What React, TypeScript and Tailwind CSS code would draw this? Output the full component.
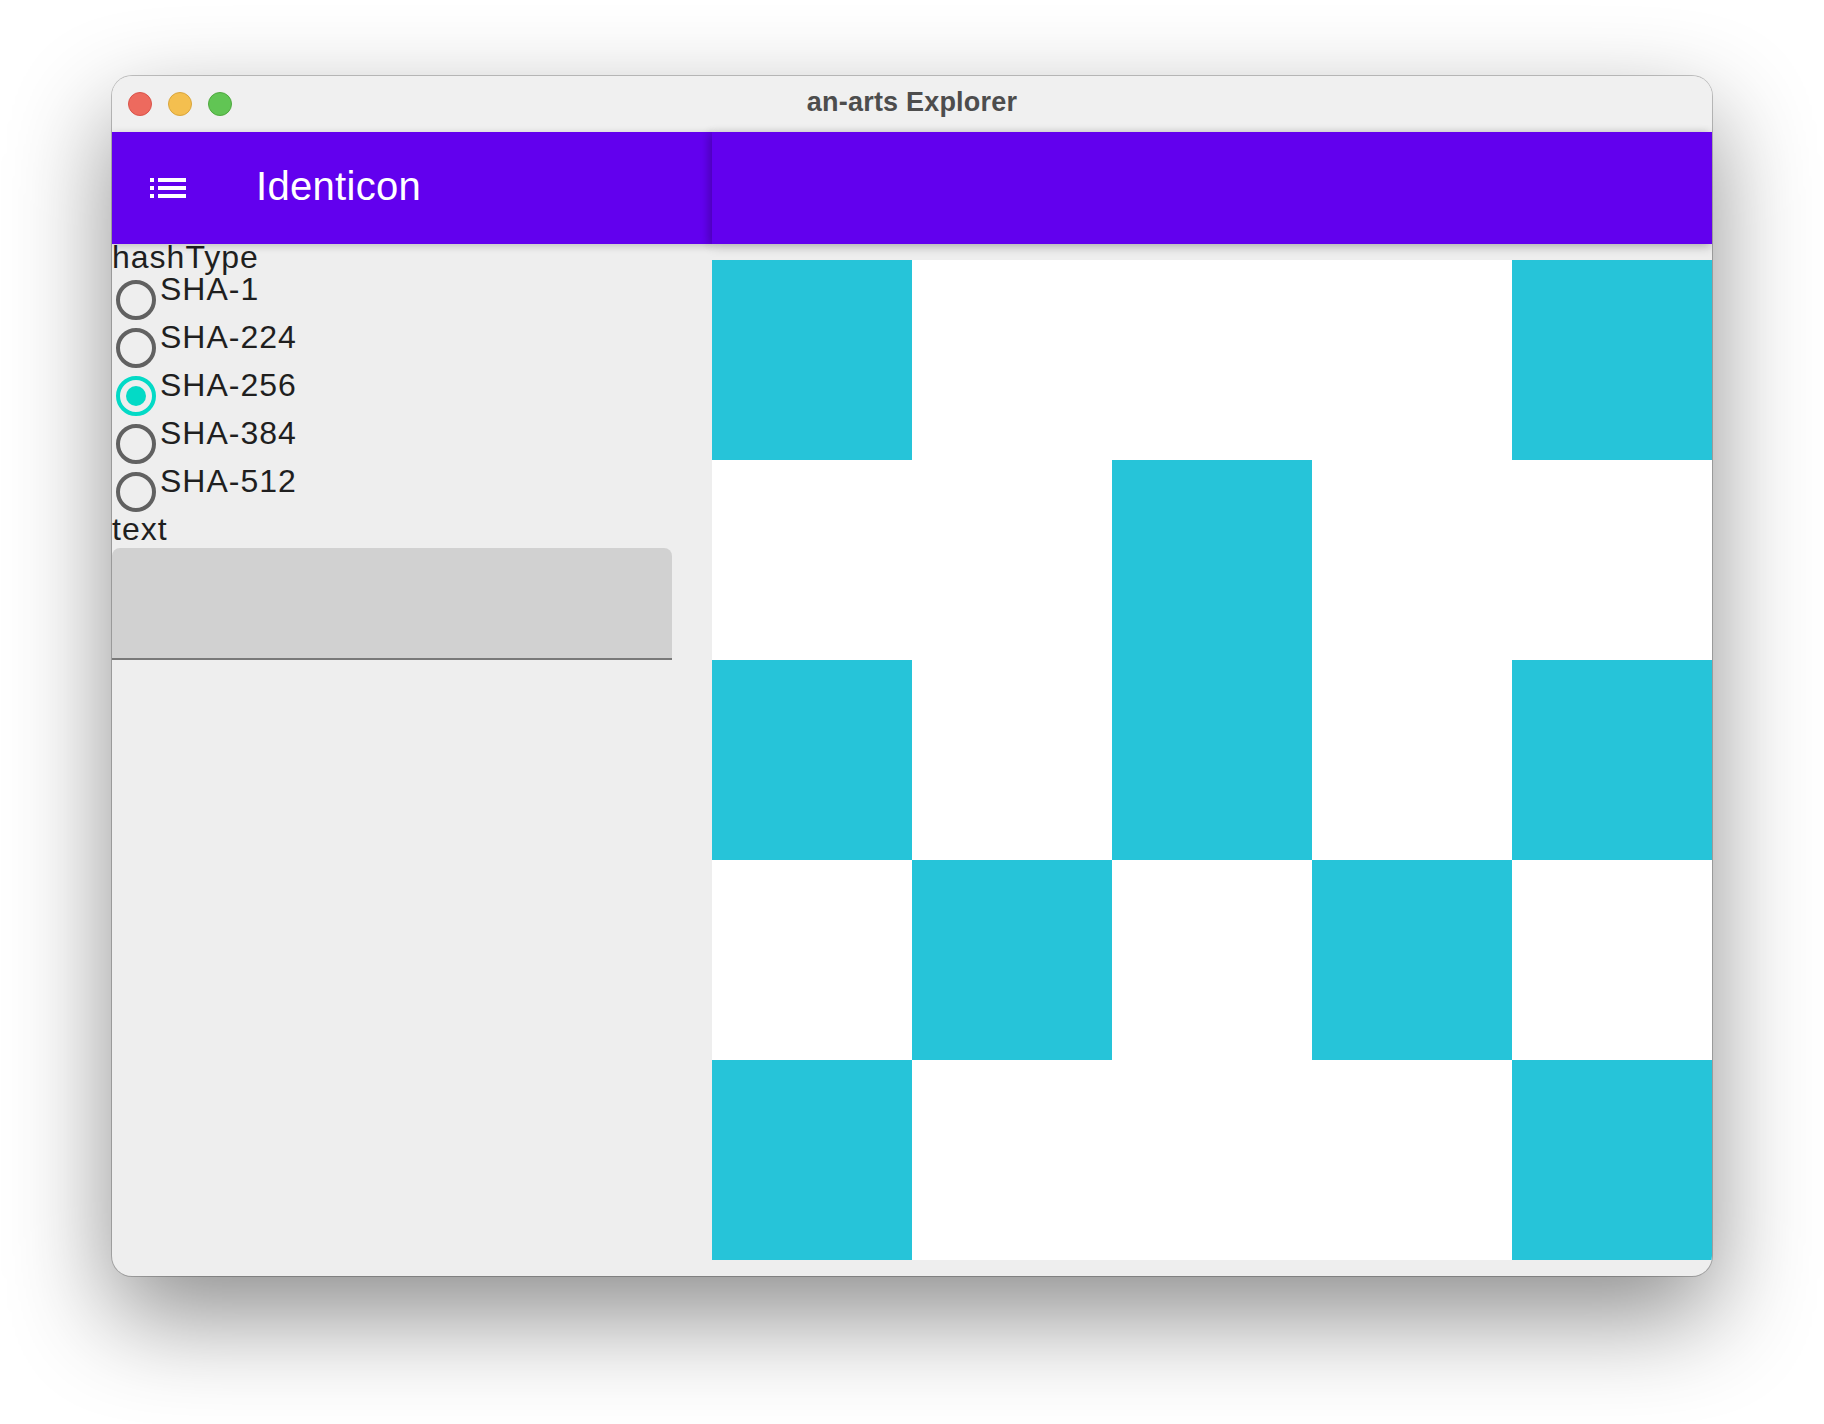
import React from 'react';

const HASH_TYPES = ['SHA-1', 'SHA-224', 'SHA-256', 'SHA-384', 'SHA-512'];

// 5x5 identicon pattern, 1 = filled
const PATTERN = [
  [1, 0, 0, 0, 1],
  [0, 0, 1, 0, 0],
  [1, 0, 1, 0, 1],
  [0, 1, 0, 1, 0],
  [1, 0, 0, 0, 1],
];

const ListIcon = () => (
  <svg viewBox="0 0 24 24" className="h-[48px] w-[48px]" fill="white">
    <path d="M3 13h2v-2H3v2zm0 4h2v-2H3v2zm0-8h2V7H3v2zm4 4h14v-2H7v2zm0 4h14v-2H7v2zM7 7v2h14V7H7z" />
  </svg>
);

const Radio = ({ selected }: { selected: boolean }) => (
  <div className="flex h-[48px] w-[48px] shrink-0 items-center justify-center">
    {selected ? (
      <div className="flex h-[40px] w-[40px] items-center justify-center rounded-full border-[4px] border-[#03dac6]">
        <div className="h-[20px] w-[20px] rounded-full bg-[#03dac6]" />
      </div>
    ) : (
      <div className="h-[40px] w-[40px] rounded-full border-[4px] border-[#616161]" />
    )}
  </div>
);

const Label = ({ children }: { children: React.ReactNode }) => (
  <div className="pb-[5px] text-[32px] leading-[27px] tracking-[1px] text-[#1f1f1f]">{children}</div>
);

export default function App() {
  const selected = 'SHA-256';

  return (
    <div className="h-[1424px] w-[1824px] bg-white pl-[112px] pt-[76px] font-['Liberation_Sans',Arial,sans-serif]">
      <div className="flex h-[1200px] w-[1600px] flex-col overflow-hidden rounded-[20px] bg-[#eeeeee] shadow-[0_0_0_1px_rgba(0,0,0,0.22),0_40px_100px_rgba(0,0,0,0.45)]">
        {/* title bar */}
        <div className="grid h-[56px] shrink-0 grid-cols-[1fr_auto_1fr] items-center bg-[#f0f0f0]">
          <div className="flex items-center gap-[16px] pl-[16px]">
            <div className="h-[24px] w-[24px] rounded-full border border-[#d9534a] bg-[#ed6a5e]" />
            <div className="h-[24px] w-[24px] rounded-full border border-[#d9a53c] bg-[#f4bf4f]" />
            <div className="h-[24px] w-[24px] rounded-full border border-[#4fa83f] bg-[#61c554]" />
          </div>
          <div className="pb-[3px] text-[27px] font-bold leading-[27px] tracking-[0.2px] text-[#4d4d4d]">
            an-arts Explorer
          </div>
          <div />
        </div>

        <div className="flex min-h-0 flex-1">
          {/* left pane */}
          <div className="flex w-[600px] shrink-0 flex-col">
            <div className="relative z-10 flex h-[112px] shrink-0 items-center bg-[#6200ee] pl-[32px] shadow-[0_2px_8px_rgba(0,0,0,0.2)]">
              <ListIcon />
              <div className="ml-[64px] pb-[5px] text-[40px] leading-[40px] tracking-[0.3px] text-white">Identicon</div>
            </div>
            <div className="flex flex-col">
              <Label>hashType</Label>
              {HASH_TYPES.map((h) => (
                <div key={h} className="flex h-[48px] items-start">
                  <Radio selected={h === selected} />
                  <Label>{h}</Label>
                </div>
              ))}
              <Label>text</Label>
              <div className="h-[112px] w-[560px] rounded-t-[8px] border-b-2 border-[#797979] bg-[#d1d1d1]" />
            </div>
          </div>

          {/* right pane */}
          <div className="flex flex-1 flex-col">
            <div className="relative z-20 h-[112px] shrink-0 bg-[#6200ee] shadow-[0_3px_10px_rgba(0,0,0,0.2),-4px_0_8px_rgba(0,0,0,0.12)]" />
            <div className="flex flex-1 items-center justify-center">
              <div className="grid grid-cols-5 bg-white">
                {PATTERN.flat().map((v, i) => (
                  <div key={i} className={v ? 'h-[200px] w-[200px] bg-[#26c4d9]' : 'h-[200px] w-[200px] bg-white'} />
                ))}
              </div>
            </div>
          </div>
        </div>
      </div>
    </div>
  );
}
